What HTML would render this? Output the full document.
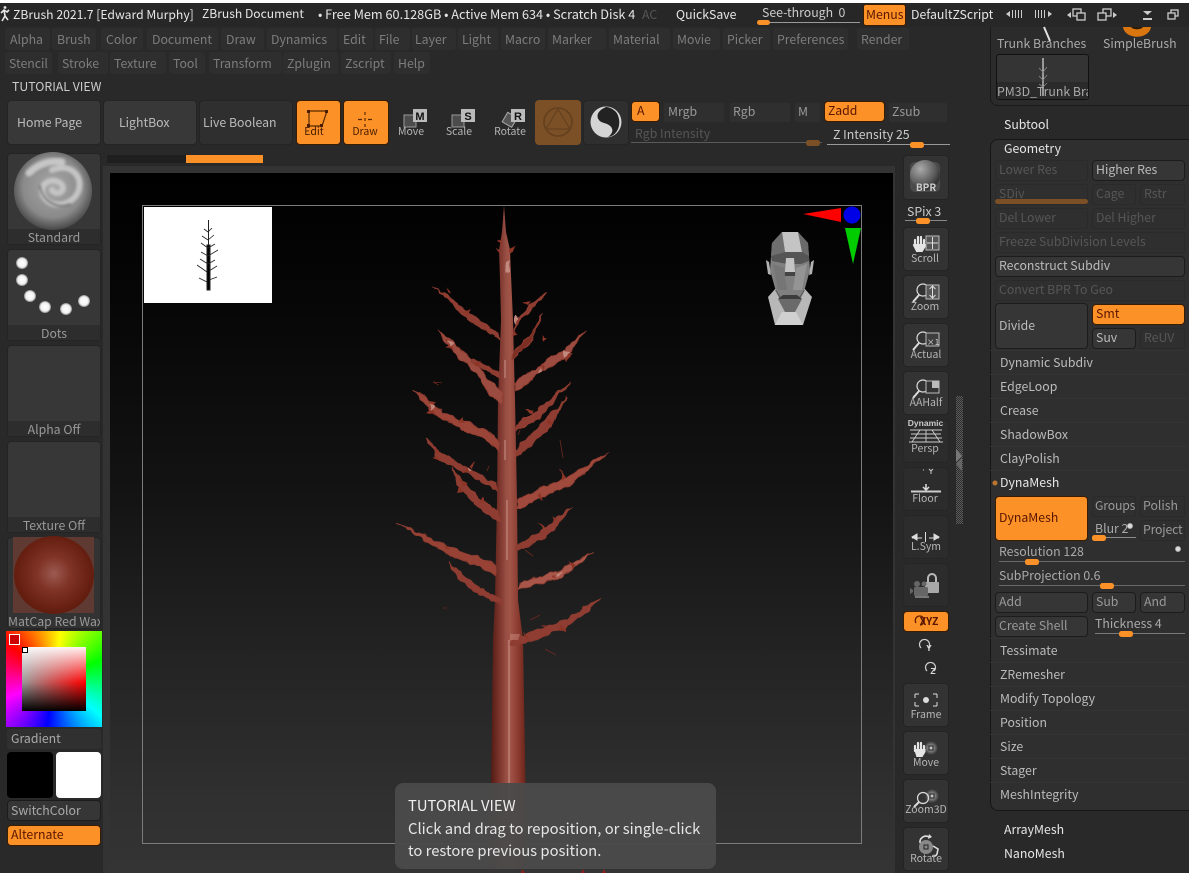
<!DOCTYPE html>
<html><head><meta charset="utf-8"><style>
html,body{margin:0;padding:0;width:1189px;height:873px;overflow:hidden;background:#292929}
body{position:relative;font-family:"Noto Sans CJK JP","Liberation Sans",sans-serif;font-size:12.3px;color:#bbb}
div{position:absolute;box-sizing:border-box}
.t{white-space:nowrap;line-height:20px;height:20px}
.w{color:#e6e6e6}.d{color:#7d7d7d}.x{color:#565656}.k{color:#4a1500}
.m{background:#2e2e2e;border-radius:3px;height:22px}
.b{background:#363636;border:1px solid #1c1c1c;border-radius:4px;line-height:17px;padding-left:3px;white-space:nowrap;overflow:hidden;height:21px}
.n{background:#2f2f2f;border:1px solid #2a2a2a;border-radius:3px;line-height:17px;padding-left:3px;white-space:nowrap;overflow:hidden;height:21px}
.o{background:#fb9127;border:1px solid #3a1c00;border-radius:4px;color:#5a1500;line-height:17px;padding-left:3px;white-space:nowrap;height:21px}
.g{background:#333;border-radius:4px;border:1px solid #242424}
.l{font-size:10.5px;line-height:12px;text-align:center;color:#b5b5b5;white-space:nowrap;width:46px}
.r{left:990px;width:199px;border-top:1px solid #333;height:24px}
</style></head><body>
<div style="left:0;top:0;width:1189px;height:3px;background:#fff"></div>
<div style="left:0;top:3px;width:1189px;height:24px;background:#272727"></div>
<div style="left:103px;top:166px;width:792px;height:707px;background:#333"></div>
<div style="left:110px;top:173px;width:783px;height:700px;background:linear-gradient(#000 0,#070707 20%,#141414 47%,#242424 70%,#303030 90%,#343434 100%)"></div>
<div style="left:107px;top:155px;width:79px;height:8px;background:#1f1f1f"></div>
<div style="left:186px;top:155px;width:77px;height:8px;background:#fb9127"></div>

<!-- menus -->
<div class="m" style="left:5px;top:28px;width:45px"></div><div class="m" style="left:52px;top:28px;width:44px"></div><div class="m" style="left:101px;top:28px;width:42px"></div><div class="m" style="left:147px;top:28px;width:71px"></div><div class="m" style="left:221px;top:28px;width:43px"></div><div class="m" style="left:267px;top:28px;width:70px"></div><div class="m" style="left:339px;top:28px;width:34px"></div><div class="m" style="left:375px;top:28px;width:35px"></div><div class="m" style="left:412px;top:28px;width:44px"></div><div class="m" style="left:458px;top:28px;width:40px"></div><div class="m" style="left:501px;top:28px;width:44px"></div><div class="m" style="left:548px;top:28px;width:58px"></div><div class="m" style="left:609px;top:28px;width:61px"></div><div class="m" style="left:673px;top:28px;width:47px"></div><div class="m" style="left:723px;top:28px;width:47px"></div><div class="m" style="left:773px;top:28px;width:75px"></div><div class="m" style="left:857px;top:28px;width:52px"></div>
<div class="m" style="left:5px;top:52px;width:47px"></div><div class="m" style="left:58px;top:52px;width:50px"></div><div class="m" style="left:110px;top:52px;width:56px"></div><div class="m" style="left:169px;top:52px;width:36px"></div><div class="m" style="left:209px;top:52px;width:73px"></div><div class="m" style="left:283px;top:52px;width:55px"></div><div class="m" style="left:341px;top:52px;width:50px"></div><div class="m" style="left:394px;top:52px;width:36px"></div>

<!-- top tiles -->
<div class="g" style="left:7px;top:100px;width:94px;height:45px;background:#383838"></div>
<div class="g" style="left:103px;top:100px;width:94px;height:45px;background:#383838"></div>
<div class="g" style="left:199px;top:100px;width:94px;height:45px;background:#2f2f2f"></div>
<div class="o" style="left:296px;top:100px;width:45px;height:45px"></div>
<div class="o" style="left:343px;top:100px;width:46px;height:45px"></div>
<div style="left:535px;top:100px;width:46px;height:45px;background:#7b5027;border-radius:4px"></div>
<div class="g" style="left:583px;top:100px;width:46px;height:45px;background:#2f2f2f"></div>

<!-- left column -->
<div class="g" style="left:7px;top:153px;width:94px;height:92px;background:#373737"></div>
<div style="left:8px;top:229px;width:92px;height:15px;background:#2d2d2d"></div>
<div class="g" style="left:7px;top:249px;width:94px;height:92px;background:#373737"></div>
<div style="left:8px;top:325px;width:92px;height:15px;background:#2d2d2d"></div>
<div class="g" style="left:7px;top:345px;width:94px;height:92px;background:#373737"></div>
<div style="left:8px;top:421px;width:92px;height:15px;background:#2d2d2d"></div>
<div class="g" style="left:7px;top:441px;width:94px;height:92px;background:#373737"></div>
<div style="left:8px;top:517px;width:92px;height:15px;background:#2d2d2d"></div>
<div class="g" style="left:7px;top:537px;width:94px;height:92px;background:#333"></div>
<div style="left:13px;top:537px;width:81px;height:76px;background:#5f3a33"></div>
<div style="left:14px;top:536px;width:80px;height:78px;border-radius:50%;background:radial-gradient(circle at 50% 48%,#9c5a50 0,#7f3326 30%,#651f11 65%,#561909 100%)"></div>
<div style="left:6px;top:631px;width:96px;height:96px;background:conic-gradient(from -52deg at 50% 50%,#f00,#ff0,#0f0,#0ff,#00f,#f0f,#f00)"></div>
<div style="left:22px;top:647px;width:64px;height:64px;background:linear-gradient(rgba(255,255,255,.95) 0,rgba(255,255,255,0) 55%,rgba(0,0,0,0) 55%,#000 100%),linear-gradient(90deg,#999,#f00)"></div>
<div style="left:9px;top:634px;width:11px;height:11px;border:1px solid #fff;background:#c00"></div>
<div style="left:22px;top:647px;width:6px;height:6px;border:1px solid #000;background:#fff"></div>
<div style="left:7px;top:729px;width:94px;height:20px;background:#303030;border-radius:3px"></div>
<div style="left:7px;top:752px;width:46px;height:46px;background:#000;border-radius:4px"></div>
<div style="left:56px;top:752px;width:45px;height:46px;background:#fff;border-radius:4px"></div>
<div class="b" style="left:7px;top:800px;width:94px"></div>
<div class="o" style="left:7px;top:825px;width:94px"></div>

<!-- right panel frames -->
<div style="left:990px;top:27px;width:199px;height:79px;background:#2b2b2b;border:1px solid #1a1a1a;border-top:0;border-right:0;border-radius:0 0 0 8px"></div>
<div style="left:996px;top:54px;width:93px;height:46px;background:#343434;border:1px solid #111;border-radius:3px"></div>
<div style="left:997px;top:82px;width:91px;height:17px;background:#2a2a2a"></div>
<div style="left:990px;top:139px;width:199px;height:672px;background:#2f2f2f;border:1px solid #161616;border-right:0;border-radius:8px 0 0 8px"></div>
<div class="r" style="top:350px"></div><div class="r" style="top:374px"></div><div class="r" style="top:398px"></div><div class="r" style="top:422px"></div><div class="r" style="top:446px"></div><div class="r" style="top:470px"></div><div class="r" style="top:638px"></div><div class="r" style="top:662px"></div><div class="r" style="top:686px"></div><div class="r" style="top:710px"></div><div class="r" style="top:734px"></div><div class="r" style="top:758px"></div><div class="r" style="top:782px"></div>

<!-- tool column tiles -->
<div class="g" style="left:903px;top:155px;width:46px;height:45px"></div>
<div class="g" style="left:903px;top:227px;width:46px;height:44px"></div>
<div class="g" style="left:903px;top:275px;width:46px;height:44px"></div>
<div class="g" style="left:903px;top:323px;width:46px;height:44px"></div>
<div class="g" style="left:903px;top:371px;width:46px;height:44px"></div>
<div class="g" style="left:903px;top:419px;width:46px;height:44px;background:#2c2c2c;border-color:#262626"></div>
<div class="g" style="left:903px;top:467px;width:46px;height:44px;background:#2c2c2c;border-color:#262626"></div>
<div class="g" style="left:903px;top:515px;width:46px;height:44px;background:#2c2c2c;border-color:#262626"></div>
<div class="g" style="left:903px;top:563px;width:46px;height:44px;background:#2c2c2c;border-color:#262626"></div>
<div class="o" style="left:903px;top:611px;width:46px;height:21px"></div>
<div class="g" style="left:903px;top:683px;width:46px;height:44px"></div>
<div class="g" style="left:903px;top:731px;width:46px;height:44px"></div>
<div class="g" style="left:903px;top:779px;width:46px;height:44px"></div>
<div class="g" style="left:903px;top:827px;width:46px;height:44px"></div>
<div style="left:956px;top:396px;width:7px;height:128px;background:repeating-conic-gradient(#5a5a5a 0 25%,#2c2c2c 0 50%) 0 0/2px 2px"></div>

<!-- panel buttons -->
<div class="n x" style="left:995px;top:160px;width:93px">Lower Res</div>
<div class="b" style="left:1092px;top:160px;width:93px">Higher Res</div>
<div class="n x" style="left:995px;top:184px;width:93px">SDiv</div>
<div class="n x" style="left:1092px;top:184px;width:44px">Cage</div>
<div class="n x" style="left:1140px;top:184px;width:45px">Rstr</div>
<div class="n x" style="left:995px;top:208px;width:93px">Del Lower</div>
<div class="n x" style="left:1092px;top:208px;width:93px">Del Higher</div>
<div class="n x" style="left:995px;top:232px;width:190px">Freeze SubDivision Levels</div>
<div class="b" style="left:995px;top:256px;width:190px">Reconstruct Subdiv</div>
<div class="n x" style="left:995px;top:280px;width:190px">Convert BPR To Geo</div>
<div class="b" style="left:995px;top:303px;width:93px;height:46px;line-height:42px">Divide</div>
<div class="o" style="left:1092px;top:304px;width:93px">Smt</div>
<div class="b" style="left:1092px;top:328px;width:44px">Suv</div>
<div class="n x" style="left:1140px;top:328px;width:45px">ReUV</div>
<div class="o" style="left:995px;top:496px;width:93px;height:45px;line-height:41px">DynaMesh</div>
<div class="n" style="left:1092px;top:496px;width:44px;color:#999;padding-left:2px;letter-spacing:-.2px">Groups</div>
<div class="n" style="left:1140px;top:496px;width:45px;color:#999;padding-left:2px">Polish</div>
<div class="n" style="left:1140px;top:520px;width:45px;color:#999;padding-left:2px;letter-spacing:-.2px">Project</div>
<div class="b" style="left:995px;top:592px;width:93px;color:#999">Add</div>
<div class="b" style="left:1092px;top:592px;width:44px;color:#999">Sub</div>
<div class="b" style="left:1140px;top:592px;width:45px;color:#999">And</div>
<div class="b" style="left:995px;top:616px;width:93px;color:#999">Create Shell</div>

<!-- top row small buttons -->
<div class="o" style="left:631px;top:101px;width:29px;padding-left:5px">A</div>
<div class="n d" style="left:663px;top:102px;width:62px;padding-left:4px;color:#999">Mrgb</div>
<div class="n" style="left:729px;top:102px;width:62px;color:#999">Rgb</div>
<div class="n" style="left:794px;top:102px;width:27px;color:#999">M</div>
<div class="o" style="left:824px;top:101px;width:61px">Zadd</div>
<div class="n" style="left:888px;top:102px;width:60px;color:#999">Zsub</div>
<div class="o" style="left:863px;top:4px;width:43px;height:22px;padding-left:2px;border-radius:3px;line-height:19px">Menus</div>

<!-- graphics layer -->
<svg width="1189" height="873" viewBox="0 0 1189 873" style="position:absolute;left:0;top:0">
<defs>
<linearGradient id="tr" x1="0" x2="1" y1="0" y2="0"><stop offset="0" stop-color="#4e1811"/><stop offset=".25" stop-color="#7a342b"/><stop offset=".45" stop-color="#9a5045"/><stop offset=".55" stop-color="#a15448"/><stop offset=".8" stop-color="#87372c"/><stop offset="1" stop-color="#602015"/></linearGradient>
<radialGradient id="sp" cx=".5" cy=".45" r=".55"><stop offset="0" stop-color="#a8a8a8"/><stop offset=".7" stop-color="#8a8a8a"/><stop offset="1" stop-color="#484848"/></radialGradient>
<radialGradient id="bpr" cx=".35" cy=".3" r=".7"><stop offset="0" stop-color="#aaa"/><stop offset=".7" stop-color="#5c5c5c"/><stop offset="1" stop-color="#333"/></radialGradient>
<radialGradient id="dot"><stop offset="0" stop-color="#fff"/><stop offset=".7" stop-color="#f2f2f2"/><stop offset="1" stop-color="#888"/></radialGradient>
<radialGradient id="gb" cx=".5" cy=".5" r=".5"><stop offset="0" stop-color="#ddd"/><stop offset=".5" stop-color="#777"/><stop offset="1" stop-color="#333"/></radialGradient>
<filter id="bl" x="-10%" y="-10%" width="120%" height="120%"><feGaussianBlur stdDeviation="1.300"/></filter>
<filter id="rg" filterUnits="userSpaceOnUse" x="380" y="200" width="250" height="460"><feTurbulence type="fractalNoise" baseFrequency=".11" numOctaves="2" seed="4"/><feDisplacementMap in="SourceGraphic" scale="6" xChannelSelector="R" yChannelSelector="G"/></filter>
</defs>

<!-- logo -->
<g stroke="#e8e8e8" stroke-width="1.600" fill="none"><path d="M1 13 L4 10 L7 12 L9 10"/><path d="M4 10 L5 16 L2 21"/><path d="M5 16 L8 20"/></g><circle cx="5" cy="7.500" r="1.400" fill="#e8e8e8"/>
<!-- window icons -->
<g fill="#ccc"><path d="M1006 14 l4 -3 v6z"/><path d="M1012 10h1v8h-1zM1015 10h1v8h-1zM1018 10h1v8h-1zM1021 10h1v8h-1zM1035 10h1v8h-1zM1038 10h1v8h-1zM1041 10h1v8h-1zM1044 10h1v8h-1zM1048 11l4 3-4 3z"/><path d="M1067 15l4-3v6z"/><path d="M1113 12v6l4-3z"/><path d="M1143 11h9l-4.500 4zM1143 18h9v2h-9z"/></g>
<g fill="none" stroke="#ccc" stroke-width="1.300"><rect x="1073" y="9" width="8" height="7"/><rect x="1077" y="13" width="8" height="7" fill="#272727"/><rect x="1103" y="9" width="8" height="7"/><rect x="1098" y="13" width="8" height="7" fill="#272727"/><rect x="1171" y="10" width="7" height="6"/><rect x="1168" y="13" width="7" height="6" fill="#272727"/></g>
<!-- sliders top -->
<path d="M757 22.500H860" stroke="#999"/><rect x="757" y="20" width="13" height="5" rx="2.500" fill="#fb9127"/>
<path d="M631 142.500H822" stroke="#5a5a5a"/><rect x="806" y="140" width="14" height="6" rx="2.500" fill="#7b5027"/>
<path d="M827 144.500H950" stroke="#999"/><rect x="910" y="142" width="14" height="6" rx="2.500" fill="#fb9127"/>
<!-- edit / draw -->
<g stroke="#5a2a00" fill="none" stroke-width="1.200"><path d="M309 111H327L322 126H309Z"/><path d="M365 112v3M365 118v3M365 124v3M358 119.500h4M368 119.500h4"/></g><g fill="#4a1c00"><rect x="307" y="110" width="3" height="3"/><rect x="325" y="110" width="3" height="3"/><rect x="307" y="124" width="3" height="3"/><rect x="320" y="124" width="3" height="3"/></g>
<!-- move/scale/rotate -->
<g><rect x="404" y="115" width="12" height="12" fill="#4c4c4c" stroke="#999"/><rect x="413" y="109" width="14" height="13" fill="#bbb"/><text x="420" y="120" font-size="11" font-weight="700" text-anchor="middle" fill="#111" font-family="Liberation Sans">M</text>
<rect x="452" y="115" width="12" height="12" fill="#4c4c4c" stroke="#999"/><rect x="461" y="109" width="14" height="13" fill="#bbb"/><text x="468" y="120" font-size="11" font-weight="700" text-anchor="middle" fill="#111" font-family="Liberation Sans">S</text>
<rect x="504" y="114" width="11" height="11" fill="#555" stroke="#aaa" transform="rotate(30 509 120)"/><rect x="511" y="109" width="14" height="13" fill="#bbb"/><text x="518" y="120" font-size="11" font-weight="700" text-anchor="middle" fill="#111" font-family="Liberation Sans">R</text></g>
<!-- material & s icons -->
<circle cx="558" cy="122" r="14" fill="none" stroke="#66411e" stroke-width="1.800"/><path d="M558 109 L570 129 H546Z" fill="none" stroke="#66411e" stroke-width="1.300"/>
<circle cx="606" cy="122" r="15.500" fill="#d4d4d4"/><path d="M606 107 C 594 112 596 121 604 123 C 612 125 616 131 608 137 C 620 135 622 120 616 112 C 612 108 608 107 606 107Z" fill="#222"/>
<!-- brush sphere -->
<circle cx="53" cy="191" r="39" fill="url(#sp)"/>
<g fill="none" stroke-linecap="round" filter="url(#bl)"><path d="M29 173 C38 164 50 160 62 162" stroke="#c6c6c6" stroke-width="7"/><path d="M52 170 C72 162 84 178 78 192 C72 206 50 210 43 195 C38 182 55 176 62 185 C66 192 56 196 52 190" stroke="#c4c4c4" stroke-width="6"/><path d="M40 186 C42 200 56 210 70 204" stroke="#6c6c6c" stroke-width="2"/></g>
<!-- dots -->
<g fill="url(#dot)"><circle cx="22" cy="263" r="6"/><circle cx="22" cy="280" r="6"/><circle cx="30" cy="296" r="6"/><circle cx="45" cy="307" r="6"/><circle cx="66" cy="309" r="6"/><circle cx="84" cy="301" r="6"/></g>
<!-- PM3D tile tree -->
<path d="M1044 27 L1050 41" stroke="#e0e0e0" stroke-width="2"/>
<path d="M1043 58V96" stroke="#ddd" stroke-width="1.200"/><path d="M1039 68l4 4 4-5M1039 76l4 4 4-5M1039 84l4 3 4-4" stroke="#888" fill="none" stroke-width=".8"/>
<path d="M1123 27 C1125 40 1149 40 1151 27Z" fill="#d9760f"/><path d="M1131 27 C1133 30 1141 30 1143 27Z" fill="#2e1a08"/>
<!-- frame & thumb -->
<rect x="142.500" y="205.500" width="719" height="638" fill="none" stroke="#7c7c7c"/>
<rect x="144" y="207" width="128" height="96" fill="#fff"/>
<g stroke="#222" fill="none"><path d="M208.500 220V245" stroke-width="1"/><path d="M207 245V290h3V245z" fill="#000"/><path d="M208 232l-4-3M208 232l4-4M208 240l-6-4M208 240l6-5M208 248l-7-5M208 248l7-4M208 256l-7-4M208 256l10-6M208 264l-8-5M208 264l7-4M207 272l-10-7M209 271l8-5M209 280l8-3M207 282l-8-4" stroke-width=".8"/></g>

<!-- tree -->
<path d="M504 205 L506 232 L510 250 L511 275 L513 320 L515 400 L517 500 L518 600 L523 640 L527 869 H490 L493 640 L495 600 L497 500 L498 400 L501 320 L500 280 L499 250 L502 232Z" fill="url(#tr)"/>
<g filter="url(#rg)">
<g fill="#8f3c30" stroke="#8f3c30" stroke-width=".8">
<path d="M433 286 L452 299 L468 313 L498 333 L499 340 L465 317 L451 302Z"/>
<path d="M437 330 L450 340 L456 345 L468 356 L480 368 L492 383 L502 392 L502 405 L490 395 L478 376 L464 361 L449 347Z" fill="#9c4c3f"/>
<path d="M473 359 L499 372 L499 377 L470 362Z"/>
<path d="M413 390 L430 401 L434 407 L460 420 L487 431 L499 443 L499 452 L485 439 L458 427 L431 412 L427 406Z" fill="#9a4437"/>
<path d="M425 438 L440 452 L467 467 L496 484 L497 490 L465 473 L436 458 L434 451Z"/>
<path d="M452 468 L465 484 L481 500 L499 512 L500 522 L478 507 L461 490 L457 482Z"/>
<path d="M547 292 L529 307 L516 320 L513 330 L525 314 L533 309Z"/>
<path d="M543 312 L531 334 L514 352 L511 360 L531 342 L537 328Z" fill="#7c2e23"/>
<path d="M585 331 L564 350 L540 365 L515 382 L515 392 L542 372 L568 356 L572 348Z" fill="#9c4c3f"/>
<path d="M571 382 L537 410 L516 424 L516 432 L540 418Z"/>
<path d="M567 397 L548 418 L516 450 L516 458 L551 427 L556 415Z"/>
<path d="M608 452 L568 477 L538 490 L517 500 L517 509 L541 497 L571 484Z" fill="#a04a3c"/>
<path d="M572 507 L557 518 L543 530 L516 546 L516 552 L546 537 L562 520Z"/>
<path d="M397 522 L447 546 L495 564 L495 574 L445 553Z" fill="#974236"/>
<path d="M448 562 L466 577 L480 588 L503 599 L503 606 L476 593 L460 580Z"/>
<path d="M593 552 L560 570 L520 583 L518 590 L560 578 L578 565Z" fill="#a8574a"/>
<path d="M602 598 L560 622 L520 636 L510 640 L510 646 L535 640 L565 627 L585 613Z"/>
</g>
<g fill="#8d3428">
<path d="M500 250l-4 -2 5 7zM509 250l6-4-4 8zM497 240l5 4v-6zM449 294l-2-6 5 7zM465 312l5-2-3 6zM448 344l-3-6 5 4zM475 365l5-5 0 7zM432 405l-4-6 7 4zM460 422l2-6 3 8zM437 454l-3-8 6 5zM469 465l6-3-3 6zM463 487l-3-8 6 4zM480 502l4-6 0 8zM528 307l-4-5 6 1zM541 336l6 2-5 3zM566 351l6 5-8-1zM544 370l-4-6 6 2zM532 413l-7-4 8 0zM548 420l6 5-7-1zM563 481l-3-12 6 8zM540 492l4 8-7-5zM543 530l-5-8 7 5zM553 523l-1-7 5 3zM445 549l1-5 3 6zM572 570l-2-9 5 5zM555 575l2 4-5-2zM546 628l-6-4 6 1zM562 625l3 6-6-3zM527 640l-5-10 6 7zM513 330l5 5-6 1z"/>
<path d="M450 344l-5 5 9 1zM432 408l-6 4 10 2zM563 354l3 7 7-8zM438 456l-5 2 8 3zM467 468l-5 5 9 0zM460 487l-4 6 9-1z"/>
</g>
<g fill="#c28a7f"><path d="M447 341l6 3-3 4zM430 404l5 3-4 3zM562 350l8 3-6 4zM541 368l-3 5 5 0zM563 571l-6 2 1 3zM467 468l5 1-3 3zM505 262l4-2 1 12-4 2zM514 315l5 4-5 6z"/></g>
</g>
<path d="M505 360v18M505 440v20M507 500v60M509 640v170" stroke="#d9a79f" stroke-width=".8" fill="none"/>
<path d="M510 634h10l-2 6h-8z" fill="#c9897e" opacity=".5"/>
<g stroke="#6b2a20" stroke-width=".8"><path d="M442 383l-9 -1 6 3M520 430l-2 5M489 466l-2 5M560 440l3 18M525 550l8 6M530 620l10-5M545 649l11 6M447 608h-4"/></g>
<g fill="#8a1f1f"><path d="M522 869l3 4h-4zM583 869l2 4h-4zM604 869l2 4h-4z"/></g>

<!-- gizmo -->
<path d="M803 214 L841 208 V222Z" fill="#f00"/><circle cx="852" cy="215" r="8.500" fill="#0000e6"/><path d="M845 228H861L853 264Z" fill="#0c0"/>
<!-- head -->
<g>
<path d="M768 297 L776 288 H804 L812 297 L803 325 H775Z" fill="#b8b8b8"/>
<path d="M775 325 L782 312 H796 L803 325Z" fill="#d0d0d0"/>
<path d="M775 290 L786 310 H794 L805 290 Z" fill="#5c5c5c"/>
<path d="M782 232 H798 L808 243 L810 270 L805 288 L795 304 H785 L775 288 L770 270 L772 243Z" fill="#808080"/>
<path d="M782 232 H798 L802 252 H785Z" fill="#c4c4c4"/>
<path d="M772 243 L782 232 L785 252 L771 256Z" fill="#6f6f6f"/>
<path d="M808 243 L798 232 L802 252 L809 256Z" fill="#6a6a6a"/>
<path d="M771 256 L785 252 H802 L809 256 L809 261 L801 264 H787 L772 261Z" fill="#555"/>
<path d="M786 258 H794 L795 272 H785Z" fill="#c4c4c4"/>
<path d="M785 272 H795 L796 276 H784Z" fill="#444"/>
<path d="M773 264 L784 268 L787 290 L778 290Z" fill="#767676"/>
<path d="M807 264 L796 268 L793 290 L802 290Z" fill="#949494"/>
<path d="M783 295 H797 L802 299 H778Z" fill="#3c3c3c"/>
<path d="M778 299 H802 L795 312 H785Z" fill="#6a6a6a"/>
<path d="M766 260 L769 262 L771 275 L768 274Z" fill="#b2b2b2"/><path d="M814 260 L811 262 L809 275 L812 274Z" fill="#b2b2b2"/>
</g>

<!-- BPR sphere -->
<rect x="910" y="162" width="30" height="30" rx="5" fill="#4a4a4a"/><circle cx="925" cy="175" r="15" fill="url(#bpr)"/>
<path d="M905 220.500H947" stroke="#888"/><rect x="916" y="218" width="14" height="6" rx="2.500" fill="#fb9127"/>

<!-- tool icons -->
<g stroke="#e4e4e4" stroke-width="2.200" stroke-linecap="round" fill="none"><path d="M915 246v-6M918 245v-8M921 245v-8M924 246v-6"/><path d="M914 245l3 6"/></g><path d="M914 244h11.500v3l-3 5h-6z" fill="#e4e4e4"/>
<rect x="926" y="236" width="13" height="14" fill="#555" stroke="#bbb"/><path d="M932.500 237v12M927 243h11" stroke="#ddd"/>
<g fill="none" stroke="#ddd" stroke-width="1.200"><circle cx="923" cy="290" r="6"/><circle cx="923" cy="338" r="6"/><circle cx="923" cy="386" r="6"/></g>
<g stroke="#ddd" stroke-width="2"><path d="M913 302l6-7M913 350l6-7M913 398l6-7"/></g>
<rect x="926" y="285" width="13" height="14" fill="#555" stroke="#bbb"/><path d="M932.500 286v12M929.500 289l3-3 3 3M929.500 295l3 3 3-3" stroke="#ddd" fill="none"/>
<rect x="926" y="333" width="13" height="13" fill="#3e3e3e" stroke="#bbb"/><text x="933" y="345" font-size="8" text-anchor="middle" fill="#ddd">×1</text>
<rect x="926" y="381" width="13" height="12" fill="#333" stroke="#bbb"/><path d="M932 381h7v7h-7z" fill="#bbb"/>
<text x="925.500" y="426" font-size="8.500" font-weight="700" text-anchor="middle" fill="#ccc" font-family="Liberation Sans">Dynamic</text>
<g stroke="#ccc" fill="none" stroke-width=".9"><path d="M910 430H942M911 434H941M910 438H942M909 442H943M920 430L912 442M926 430V442M932 430L940 442"/></g>
<path d="M923 470h1M929 469l2 2 2-2 M931 471v3" stroke="#ccc" fill="none"/>
<path d="M926 484v5M923 487l3 3 3-3" stroke="#ddd" stroke-width="1.500" fill="none"/><path d="M911 491.500H941" stroke="#ccc" stroke-width="2"/>
<g stroke="#ddd" fill="#ddd"><path d="M912 538H922M929 538H939M925.500 532V542" fill="none"/><path d="M917 534l-5 3 5 3zM934 534l5 3-5 3z"/></g>
<rect x="925" y="582" width="14" height="11" rx="1" fill="#a8a8a8"/><path d="M928 582v-4a4 4 0 0 1 8 0v4" fill="none" stroke="#b8b8b8" stroke-width="2"/>
<rect x="914" y="587" width="14" height="9" rx="1.500" fill="#666"/><circle cx="917" cy="584" r="3" fill="#666"/><circle cx="924" cy="584" r="2.500" fill="#666"/><path d="M913 590l-3-2v6l3-2z" fill="#666"/><path d="M915 597h14" stroke="#777" stroke-width="2"/>
<g fill="none" stroke="#cfcfcf" stroke-width="1.200"><path d="M921 648a5 5 0 1 1 7 0"/><path d="M927 671a5 5 0 1 1 7 0"/></g>
<text x="929" y="651" font-size="8.500" font-weight="700" text-anchor="middle" fill="#ddd" font-family="Liberation Sans">Y</text><text x="933" y="674" font-size="8.500" font-weight="700" text-anchor="middle" fill="#ddd" font-family="Liberation Sans">Z</text>
<path d="M916 623a4.500 4.500 0 1 1 4 2" fill="none" stroke="#6a1c00" stroke-width="1.300"/>
<g stroke="#ddd" fill="none"><path d="M915 694h4M915 694v4M937 694h-4M937 694v4M915 706v-4M915 706h4M937 706v-4M937 706h-4"/></g><circle cx="926" cy="700" r="3" fill="#ddd"/>
<circle cx="931" cy="748" r="7" fill="url(#gb)"/><rect x="929" y="746" width="4" height="4" fill="none" stroke="#222"/>
<g stroke="#e4e4e4" stroke-width="2.200" stroke-linecap="round" fill="none"><path d="M915 751v-5M918 750v-7M921 750v-7M924 751v-5"/></g><path d="M914 749h11.500v3l-3 5h-6z" fill="#e4e4e4"/>
<circle cx="932" cy="796" r="7" fill="url(#gb)"/><rect x="930" y="794" width="4" height="4" fill="none" stroke="#222"/><circle cx="923" cy="798" r="5.500" fill="none" stroke="#ddd" stroke-width="1.200"/><path d="M914 807l5-5" stroke="#ddd" stroke-width="2"/>
<circle cx="926" cy="847" r="7" fill="#888"/><rect x="924" y="845" width="4" height="4" fill="none" stroke="#222"/><path d="M920 843a6 6 0 0 1 9-6M933 846l5 3-1 5a4 4 0 0 1-5 2" fill="none" stroke="#ddd" stroke-width="1.600"/><path d="M929 834l3 3-4 2z" fill="#ddd"/>
<!-- right scroll arrows -->
<path d="M956 449 L962 456 L956 462Z" fill="#777"/><path d="M962 458 L956 464 L962 471Z" fill="#666"/>

<!-- panel widgets -->
<rect x="995" y="199" width="93" height="5" rx="2.500" fill="#7b5027"/>
<circle cx="995" cy="483" r="2.500" fill="#b9762f"/>
<path d="M1095 537.500H1136" stroke="#8a8a8a"/><rect x="1092" y="535" width="14" height="6" rx="2.500" fill="#fb9127"/><circle cx="1130" cy="526" r="3" fill="url(#dot)" opacity=".85"/>
<path d="M999 561.500H1185" stroke="#6a6a6a"/><rect x="1025" y="559" width="14" height="6" rx="2.500" fill="#fb9127"/><circle cx="1178" cy="549" r="3" fill="url(#dot)" opacity=".85"/>
<path d="M999 585.500H1185" stroke="#6a6a6a"/><rect x="1100" y="583" width="14" height="6" rx="2.500" fill="#fb9127"/>
<path d="M1095 633.500H1185" stroke="#7a7a7a"/><rect x="1119" y="631" width="14" height="6" rx="2.500" fill="#fb9127"/>
</svg>

<!-- title bar -->
<div class="t w" style="left:13px;top:4px;font-size:12.200px">ZBrush 2021.7 [Edward Murphy]</div>
<div class="t w" style="left:202px;top:4px;font-size:12.100px">ZBrush Document</div>
<div class="t w" style="left:318px;top:4px;width:317px;overflow:hidden;font-size:12.700px">• Free Mem 60.128GB • Active Mem 634 • Scratch Disk 4</div>
<div class="t x" style="left:642px;top:4px">AC</div>
<div class="t w" style="left:676px;top:4px">QuickSave</div>
<div class="t" style="left:762px;top:2px;color:#ccc">See-through&nbsp; 0</div>
<div class="t w" style="left:911px;top:4px">DefaultZScript</div>

<!-- menu text -->
<div class="t d" style="left:10px;top:29px">Alpha</div><div class="t d" style="left:57px;top:29px">Brush</div><div class="t d" style="left:106px;top:29px">Color</div><div class="t d" style="left:152px;top:29px">Document</div><div class="t d" style="left:226px;top:29px">Draw</div><div class="t d" style="left:271px;top:29px">Dynamics</div><div class="t d" style="left:343px;top:29px">Edit</div><div class="t d" style="left:379px;top:29px">File</div><div class="t d" style="left:415px;top:29px">Layer</div><div class="t d" style="left:462px;top:29px">Light</div><div class="t d" style="left:505px;top:29px">Macro</div><div class="t d" style="left:552px;top:29px">Marker</div><div class="t d" style="left:613px;top:29px">Material</div><div class="t d" style="left:677px;top:29px">Movie</div><div class="t d" style="left:727px;top:29px">Picker</div><div class="t d" style="left:777px;top:29px">Preferences</div><div class="t d" style="left:861px;top:29px">Render</div>
<div class="t d" style="left:9px;top:53px">Stencil</div><div class="t d" style="left:62px;top:53px">Stroke</div><div class="t d" style="left:114px;top:53px">Texture</div><div class="t d" style="left:173px;top:53px">Tool</div><div class="t d" style="left:213px;top:53px">Transform</div><div class="t d" style="left:287px;top:53px">Zplugin</div><div class="t d" style="left:345px;top:53px">Zscript</div><div class="t d" style="left:398px;top:53px">Help</div>
<div class="t" style="left:12px;top:76px;color:#ccc">TUTORIAL VIEW</div>

<div class="t" style="left:17px;top:112px">Home Page</div>
<div class="t" style="left:119px;top:112px">LightBox</div>
<div class="t" style="left:203px;top:112px">Live Boolean</div>
<div class="l" style="left:291px;top:126px;color:#4a1c00">Edit</div>
<div class="l" style="left:342px;top:126px;color:#4a1c00">Draw</div>
<div class="l" style="left:388px;top:126px">Move</div>
<div class="l" style="left:436px;top:126px">Scale</div>
<div class="l" style="left:487px;top:126px">Rotate</div>
<div class="t x" style="left:635px;top:123px">Rgb Intensity</div>
<div class="t" style="left:833px;top:124px;color:#ccc">Z Intensity 25</div>

<!-- left labels -->
<div class="t d" style="left:7px;top:227px;width:94px;text-align:center;color:#999">Standard</div>
<div class="t d" style="left:7px;top:323px;width:94px;text-align:center;color:#999">Dots</div>
<div class="t d" style="left:7px;top:419px;width:94px;text-align:center;color:#999">Alpha Off</div>
<div class="t d" style="left:7px;top:515px;width:94px;text-align:center;color:#999">Texture Off</div>
<div class="t" style="left:8px;top:611px;width:92px;overflow:hidden;color:#999">MatCap Red Wax</div>
<div class="t" style="left:11px;top:728px;color:#aaa">Gradient</div>
<div class="t" style="left:11px;top:800px;color:#aaa">SwitchColor</div>
<div class="t" style="left:11px;top:824px;color:#5a1500">Alternate</div>

<!-- tool labels -->
<div class="l" style="left:903px;top:181px;color:#ccc;font-weight:700;font-size:10px">BPR</div>
<div class="t" style="left:907px;top:201px;color:#ccc">SPix 3</div>
<div class="l" style="left:902px;top:253px">Scroll</div><div class="l" style="left:902px;top:301px">Zoom</div><div class="l" style="left:903px;top:349px">Actual</div><div class="l" style="left:903px;top:397px">AAHalf</div><div class="l" style="left:902px;top:443px">Persp</div><div class="l" style="left:902px;top:493px">Floor</div><div class="l" style="left:903px;top:541px">L.Sym</div>
<div class="l" style="left:906px;top:616px;color:#5a1500;font-weight:700">XYZ</div>
<div class="l" style="left:903px;top:709px">Frame</div><div class="l" style="left:903px;top:757px">Move</div><div class="l" style="left:903px;top:804px">Zoom3D</div><div class="l" style="left:903px;top:853px">Rotate</div>

<!-- panel text -->
<div class="t" style="left:997px;top:33px;width:92px;overflow:hidden;color:#aaa">Trunk Branches I</div>
<div class="t" style="left:1103px;top:33px;color:#aaa">SimpleBrush</div>
<div class="t" style="left:997px;top:81px;width:91px;overflow:hidden;color:#aaa">PM3D_Trunk Bra</div>
<div class="t w" style="left:1004px;top:114px">Subtool</div>
<div class="t w" style="left:1004px;top:138px">Geometry</div>
<div class="t" style="left:1000px;top:352px">Dynamic Subdiv</div><div class="t" style="left:1000px;top:376px">EdgeLoop</div><div class="t" style="left:1000px;top:400px">Crease</div><div class="t" style="left:1000px;top:424px">ShadowBox</div><div class="t" style="left:1000px;top:448px">ClayPolish</div>
<div class="t w" style="left:1000px;top:472px">DynaMesh</div>
<div class="t" style="left:1095px;top:518px;color:#aaa">Blur 2</div>
<div class="t" style="left:999px;top:541px;color:#aaa">Resolution 128</div>
<div class="t" style="left:999px;top:565px;color:#aaa">SubProjection 0.6</div>
<div class="t" style="left:1095px;top:613px;color:#aaa">Thickness 4</div>
<div class="t" style="left:1000px;top:640px">Tessimate</div><div class="t" style="left:1000px;top:664px">ZRemesher</div><div class="t" style="left:1000px;top:688px">Modify Topology</div><div class="t" style="left:1000px;top:712px">Position</div><div class="t" style="left:1000px;top:736px">Size</div><div class="t" style="left:1000px;top:760px">Stager</div><div class="t" style="left:1000px;top:784px">MeshIntegrity</div>
<div class="t w" style="left:1004px;top:819px">ArrayMesh</div>
<div class="t w" style="left:1004px;top:843px">NanoMesh</div>

<!-- tooltip -->
<div style="left:395px;top:783px;width:321px;height:86px;background:rgba(74,74,74,.96);border-radius:8px"></div>
<div class="t" style="left:408px;top:796px;font-size:14.800px;color:#f0f0f0">TUTORIAL VIEW</div>
<div class="t" style="left:408px;top:819px;font-size:14.800px;color:#e6e6e6">Click and drag to reposition, or single-click</div>
<div class="t" style="left:408px;top:841px;font-size:14.800px;color:#e6e6e6">to restore previous position.</div>
</body></html>
